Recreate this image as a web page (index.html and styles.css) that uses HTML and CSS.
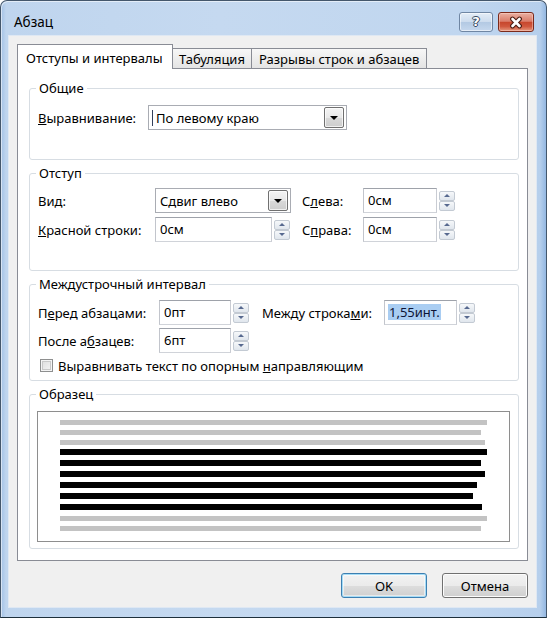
FILE: index.html
```html
<!DOCTYPE html>
<html lang="ru">
<head>
<meta charset="utf-8">
<title>Абзац</title>
<link rel="stylesheet" href="styles.css">
</head>
<body>
<div class="window">
  <div class="titlebar">
    <span class="title">Абзац</span>
    <div class="caption">
      <div class="cap-btn help"><span>?</span></div>
      <div class="cap-btn close">
        <svg width="16" height="13" viewBox="0 0 16 13"><path class="x-outline" d="M4.5 3L11.5 10M11.5 3L4.5 10"/><path class="x-fill" d="M4.5 3L11.5 10M11.5 3L4.5 10"/></svg>
      </div>
    </div>
  </div>
  <div class="client">
    <div class="tabs">
      <div class="tab active">Отступы и интервалы</div>
      <div class="tab t2">Табуляция</div>
      <div class="tab t3">Разрывы строк и абзацев</div>
    </div>
    <div class="panel">
      <fieldset class="group g1">
        <legend>Общие</legend>
        <div class="row">
          <span class="lbl lbl-align"><u>В</u>ыравнивание:</span>
          <div class="combo combo-align"><span class="caret"></span><span class="val">По левому краю</span><span class="drop"></span></div>
        </div>
      </fieldset>

      <fieldset class="group g2">
        <legend>Отступ</legend>
        <div class="grid grid-indent">
          <span class="lbl">Ви<u>д</u>:</span>
          <div class="combo combo-kind"><span class="val">Сдвиг влево</span><span class="drop"></span></div>
          <span class="lbl">С<u>л</u>ева:</span>
          <div class="spinbox"><div class="input w74">0см</div><div class="spin"><span class="up"></span><span class="down"></span></div></div>
          <span class="lbl"><u>К</u>расной строки:</span>
          <div class="spinbox"><div class="input w117">0см</div><div class="spin"><span class="up"></span><span class="down"></span></div></div>
          <span class="lbl">С<u>п</u>рава:</span>
          <div class="spinbox"><div class="input w74">0см</div><div class="spin"><span class="up"></span><span class="down"></span></div></div>
        </div>
      </fieldset>

      <fieldset class="group g3">
        <legend>Междустрочный интервал</legend>
        <div class="grid grid-spacing">
          <span class="lbl">П<u>е</u>ред абзацами:</span>
          <div class="spinbox"><div class="input w72">0пт</div><div class="spin"><span class="up"></span><span class="down"></span></div></div>
          <span class="lbl">Между строка<u>м</u>и:</span>
          <div class="spinbox"><div class="input w73 sel-input"><span class="sel">1,55инт.</span></div><div class="spin"><span class="up"></span><span class="down"></span></div></div>
          <span class="lbl">После а<u>б</u>зацев:</span>
          <div class="spinbox"><div class="input w72">6пт</div><div class="spin"><span class="up"></span><span class="down"></span></div></div>
        </div>
        <div class="check-row"><span class="checkbox"></span><span>Выравнивать текст по опорным <u>н</u>аправляющим</span></div>
      </fieldset>

      <fieldset class="group g4">
        <legend>Образец</legend>
        <div class="preview">
          <div class="line gray" style="width:427px"></div>
          <div class="line gray" style="width:421px"></div>
          <div class="line gray" style="width:425px"></div>
          <div class="line black" style="width:427px"></div>
          <div class="line black" style="width:421px"></div>
          <div class="line black" style="width:425px"></div>
          <div class="line black" style="width:417px"></div>
          <div class="line black" style="width:413px"></div>
          <div class="line black" style="width:422px"></div>
          <div class="line gray" style="width:427px"></div>
          <div class="line gray" style="width:421px"></div>
        </div>
      </fieldset>
    </div>
    <div class="buttons">
      <div class="btn default">OK</div>
      <div class="btn">Отмена</div>
    </div>
  </div>
</div>
</body>
</html>
```

FILE: styles.css
```css
* { box-sizing: border-box; }

html, body {
  margin: 0;
  padding: 0;
}

body {
  width: 547px;
  height: 618px;
  overflow: hidden;
  background: #ffffff;
  font-family: "Noto Sans", "Liberation Sans", sans-serif;
  font-size: 13px;
  color: #000;
}

/* ---------- window frame ---------- */
.window {
  width: 547px;
  height: 618px;
  display: flex;
  flex-direction: column;
  border: 1px solid #44576c;
  border-bottom-color: #1d2f3b;
  border-radius: 7px 7px 0 0;
  padding: 0 9px 9px 7px;
  background:
    linear-gradient(to right, #a3c2e6 0, #bfd5ee 5px, #c5d9f0 40%, #c0d6ef 85%, #b6cfec calc(100% - 6px), #94b8e2 100%);
  box-shadow: inset 1px 1px 0 rgba(255, 255, 255, 0.55);
}

.titlebar {
  height: 34px;
  flex: none;
  display: flex;
  align-items: flex-start;
}

.title {
  margin: 12px 0 0 6px;
  font-size: 13.5px;
  line-height: 18px;
  color: #000;
}

.caption {
  margin: 11px 3px 0 auto;
  display: flex;
  gap: 5px;
}

.cap-btn {
  height: 20px;
  border-radius: 3px;
  display: flex;
  align-items: center;
  justify-content: center;
}

.help {
  width: 34px;
  border: 1px solid #6f86a3;
  background: linear-gradient(#e4edf7 0%, #cddcee 48%, #b3c9e3 52%, #c6d8ee 100%);
  box-shadow: inset 0 0 0 1px rgba(255, 255, 255, 0.55);
}

.help span {
  font-family: "DejaVu Sans", sans-serif;
  font-weight: bold;
  font-size: 13px;
  line-height: 14px;
  color: #fff;
  text-shadow: 0 0 1px #2b3d55, 1px 0 0 #3b4d66, -1px 0 0 #3b4d66, 0 1px 0 #3b4d66, 0 -1px 0 #3b4d66;
}

.close {
  width: 36px;
  border: 1px solid #7b2a1b;
  background: linear-gradient(#eab0a2 0%, #da7d6a 46%, #c7472d 52%, #d0583e 75%, #e59a80 100%);
  box-shadow: inset 0 0 0 1px rgba(255, 220, 210, 0.45);
}

.close svg { display: block; }

.x-outline {
  stroke: #4a1c12;
  stroke-width: 4.8;
  stroke-linecap: round;
  fill: none;
}

.x-fill {
  stroke: #ffffff;
  stroke-width: 2.6;
  stroke-linecap: round;
  fill: none;
}

/* ---------- client area ---------- */
.client {
  flex: 1;
  display: flex;
  flex-direction: column;
  background: #f0f0f0;
  border: 1px solid #dfe8f3;
  padding: 8px 8px 0 8px;
}

.tabs {
  height: 24px;
  flex: none;
  display: flex;
  align-items: flex-end;
}

.tab {
  height: 20px;
  border: 1px solid #898c95;
  border-bottom: none;
  background: linear-gradient(#f7f7f7, #e4e4e4);
  line-height: 18px;
  white-space: nowrap;
}

.tab.active {
  width: 156px;
  height: 25px;
  margin-bottom: -1px;
  padding: 4px 0 0 8px;
  background: #fff;
  position: relative;
  z-index: 1;
}

.tab.t2 {
  width: 80px;
  margin-left: -1px;
  padding: 1px 0 0 6px;
}

.tab.t3 {
  width: 176px;
  margin-left: -1px;
  padding: 1px 0 0 7px;
}

.panel {
  height: 493px;
  flex: none;
  border: 1px solid #898c95;
  background: #fff;
  padding: 10px 8px 0 11px;
}

/* ---------- group boxes ---------- */
.group {
  margin: 0;
  min-width: 0;
  border: 1px solid #d7dde3;
  border-radius: 3px;
  padding: 0 8px;
}

.group + .group { margin-top: 4px; }

.group legend {
  padding: 0 3px;
  margin-left: -2px;
  line-height: 18px;
}

.g1 { padding-top: 8px; padding-bottom: 29px; }
.g2 { padding-top: 6px; padding-bottom: 28px; }
.g3 { padding-top: 7px; padding-bottom: 6px; }
.g4 { padding-top: 8px; padding-bottom: 6px; }

.row {
  display: flex;
  align-items: center;
  height: 25px;
}

.lbl { white-space: nowrap; }

.lbl-align { width: 110px; flex: none; }

.grid {
  display: grid;
  align-items: center;
  justify-items: start;
}

.grid-indent {
  grid-template-columns: 117px 147px 61px auto;
  grid-auto-rows: 25px;
  row-gap: 4px;
}

.grid-spacing {
  grid-template-columns: 121px 103px 122px auto;
  grid-auto-rows: 25px;
  row-gap: 3px;
}

/* ---------- controls ---------- */
.combo {
  height: 25px;
  display: flex;
  align-items: center;
  border: 1px solid #a9acb3;
  background: #fff;
  padding: 0 2px 0 4px;
}

.combo-align { width: 199px; padding-left: 3px; }
.combo-kind { width: 136px; }

.caret {
  width: 1px;
  height: 16px;
  background: #33405a;
  margin-right: 3px;
}

.combo .val { flex: 1; white-space: nowrap; }

.drop {
  width: 20px;
  height: 21px;
  flex: none;
  border: 1px solid #707070;
  border-radius: 2px;
  background: linear-gradient(#f4f4f4 0%, #e8e8e8 50%, #d9d9d9 51%, #cdcdcd 100%);
  box-shadow: inset 0 0 0 1px rgba(255, 255, 255, 0.7);
  display: flex;
  align-items: center;
  justify-content: center;
}

.drop::after {
  content: "";
  border-top: 4px solid #000;
  border-left: 4px solid transparent;
  border-right: 4px solid transparent;
  margin-top: 1px;
}

.spinbox {
  display: flex;
  align-items: center;
}

.input {
  height: 25px;
  border: 1px solid #a9acb3;
  border-color: #9ea2aa #c9ccd3 #d0d3d9 #c2c5cc;
  background: #fff;
  padding-left: 4px;
  line-height: 23px;
  white-space: nowrap;
}

.w72 { width: 72px; }
.w73 { width: 73px; }
.w74 { width: 74px; }
.w117 { width: 117px; }

.sel-input { padding-left: 3px; }

.sel {
  background: #a9cdf2;
  color: #0c1436;
  padding: 0 1px;
  line-height: 16px;
  display: inline-block;
}

.spin {
  width: 16px;
  height: 20px;
  margin-left: 2px;
  display: flex;
  flex-direction: column;
}

.spin span {
  flex: 1;
  border: 1px solid #c3cad3;
  border-radius: 2px;
  background: linear-gradient(#f6f8fa, #e0e6ed);
  display: flex;
  align-items: center;
  justify-content: center;
}

.spin .up::after {
  content: "";
  border-bottom: 3px solid #57698f;
  border-left: 3px solid transparent;
  border-right: 3px solid transparent;
}

.spin .down::after {
  content: "";
  border-top: 3px solid #57698f;
  border-left: 3px solid transparent;
  border-right: 3px solid transparent;
}

.check-row {
  height: 17px;
  margin-top: 4px;
  display: flex;
  align-items: center;
  padding-left: 2px;
  white-space: nowrap;
}

.checkbox {
  width: 13px;
  height: 13px;
  flex: none;
  border: 1px solid #8e8f8f;
  background: linear-gradient(135deg, #dcdcdc, #f6f6f6);
  box-shadow: inset 0 0 0 1px #f4f4f4, inset 0 0 0 2px #c9c9c9;
  margin-right: 5px;
}

/* ---------- preview ---------- */
.preview {
  height: 131px;
  margin-left: -1px;
  border: 1px solid #8e8e8e;
  background: #fff;
  padding: 8px 0 0 22px;
  display: flex;
  flex-direction: column;
}

.line { flex: none; }

.line.gray {
  height: 5px;
  margin-bottom: 5px;
  background: #c3c3c3;
}

.line.black {
  height: 6px;
  margin-bottom: 5px;
  background: #000;
}

.line.gray + .line.black { margin-top: -1px; }
.line.black + .line.gray { margin-top: 1px; }

/* ---------- buttons ---------- */
.buttons {
  margin-top: 12px;
  display: flex;
  justify-content: flex-end;
  gap: 15px;
}

.btn {
  width: 86px;
  height: 25px;
  border: 1px solid #707070;
  border-radius: 3px;
  background: linear-gradient(#f2f2f2 0%, #ebebeb 50%, #dddddd 51%, #cfcfcf 100%);
  box-shadow: inset 0 0 0 1px #fcfcfc;
  display: flex;
  align-items: center;
  justify-content: center;
  line-height: 18px;
}

.btn.default {
  border-color: #3c7fb1;
  box-shadow: inset 0 0 0 1px #a6dcf6, inset 0 0 0 2px rgba(255, 255, 255, 0.5);
}
```
